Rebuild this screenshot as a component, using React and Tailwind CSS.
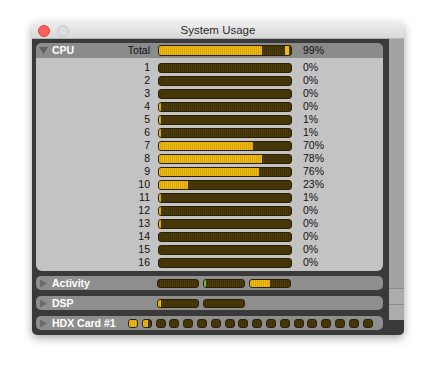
import React from 'react';

const CORES = [
  { n: 1, pct: 0 },
  { n: 2, pct: 0 },
  { n: 3, pct: 0 },
  { n: 4, pct: 0, trace: true },
  { n: 5, pct: 1, trace: true },
  { n: 6, pct: 1, trace: true },
  { n: 7, pct: 71 },
  { n: 8, pct: 78 },
  { n: 9, pct: 76 },
  { n: 10, pct: 22 },
  { n: 11, pct: 1, trace: true },
  { n: 12, pct: 0, trace: true },
  { n: 13, pct: 0, trace: true },
  { n: 14, pct: 0 },
  { n: 15, pct: 0 },
  { n: 16, pct: 0 },
];

const LABELS = { 7: '70%', 8: '78%', 9: '76%', 10: '23%' };

// one meter: dark striped track, yellow striped fill
function Meter({ pct = 0, trace, fill = 'yellow', className = '', children }) {
  const width = trace && pct < 2 ? '2px' : `${pct}%`;
  return (
    <div
      className={`relative shrink-0 overflow-hidden rounded-[3px] border border-[#2a2003] bg-[repeating-linear-gradient(90deg,#4b3b08_0px,#4b3b08_1px,#3f3105_1px,#3f3105_2px)] ${className}`}
    >
      {(pct > 0 || trace) && (
        <div
          className={
            fill === 'green'
              ? 'h-full bg-[#6fbf3c]'
              : 'h-full bg-[repeating-linear-gradient(90deg,#f0bc12_0px,#f0bc12_1px,#d9a408_1px,#d9a408_2px)]'
          }
          style={{ width }}
        />
      )}
      {children}
    </div>
  );
}

function Triangle({ open }) {
  return (
    <svg width="9" height="9" viewBox="0 0 9 9" className="shrink-0">
      {open ? <polygon points="0,1 9,1 4.5,8" fill="#5f5f5f" /> : <polygon points="1,0.5 8,4.5 1,8.5" fill="#6a6a6a" />}
    </svg>
  );
}

function Collapsed({ label, labelWidth, className = '', children }) {
  return (
    <div className={`flex h-[14px] items-center rounded-[5px] bg-[#8e8e8e] pl-[3px] ${className}`}>
      <Triangle />
      <span className={`ml-[4px] shrink-0 text-[10.5px] font-bold leading-none text-white ${labelWidth}`}>{label}</span>
      {children}
    </div>
  );
}

export default function App() {
  return (
    <div className="h-[368px] w-[429px] bg-white pl-[32px] pt-[22px] font-['Liberation_Sans',Arial,sans-serif]">
      <div className="w-[372px] overflow-hidden rounded-[5px] shadow-[0_3px_10px_rgba(0,0,0,0.35)]">
        {/* title bar */}
        <div className="relative flex h-[17px] items-center border-b border-[#b5b5b5] bg-gradient-to-b from-[#eeeeee] to-[#d8d8d8]">
          <div className="ml-[6px] mt-[1px] h-[12px] w-[12px] rounded-full border border-[#e0443e] bg-[#fc605b]" />
          <div className="ml-[7px] mt-[1px] h-[12px] w-[12px] rounded-full border border-[#c8c8c8] bg-[#dcdcdc]" />
          <div className="absolute inset-0 flex items-center justify-center pt-[2px] text-[11.5px] text-[#2b2b2b]">
            System Usage
          </div>
        </div>

        {/* body */}
        <div className="flex bg-[#3a3a3a]">
          <div className="flex w-[357px] shrink-0 flex-col pb-[5px] pl-[4px] pr-[6px] pt-[4px]">
            {/* CPU panel */}
            <div className="overflow-hidden rounded-[6px] bg-[#c3c3c3] pb-[2px]">
              <div className="flex h-[15px] items-center bg-[#8b8b8b] pl-[3px]">
                <Triangle open />
                <span className="ml-[4px] w-[40px] text-[10.5px] font-bold text-white">CPU</span>
                <span className="w-[58px] text-right text-[10.5px] text-[#111]">Total</span>
                <Meter pct={78} className="ml-[8px] h-[11px] w-[134px]">
                  <div className="absolute left-[126px] top-0 h-full w-[4px] bg-[#f0bc12]" />
                </Meter>
                <span className="ml-[11px] text-[10.5px] text-[#111]">99%</span>
              </div>
              <div className="pt-[3px]">
                {CORES.map((c) => (
                  <div key={c.n} className="flex h-[13px] items-center">
                    <span className="w-[114px] text-right text-[10.5px] leading-none text-[#111]">{c.n}</span>
                    <Meter pct={c.pct} trace={c.trace} className="ml-[8px] h-[10px] w-[134px]" />
                    <span className="ml-[11px] text-[10.5px] leading-none text-[#111]">
                      {LABELS[c.n] || `${c.pct}%`}
                    </span>
                  </div>
                ))}
              </div>
            </div>

            <Collapsed label="Activity" labelWidth="w-[105px]" className="mt-[5px]">
              <div className="flex gap-[4px]">
                <Meter className="h-[9px] w-[42px]" />
                <Meter pct={0} trace fill="green" className="h-[9px] w-[42px]" />
                <Meter pct={50} className="h-[9px] w-[42px]" />
              </div>
            </Collapsed>
            <Collapsed label="DSP" labelWidth="w-[105px]" className="mt-[6px]">
              <div className="flex gap-[4px]">
                <Meter pct={7} className="h-[9px] w-[42px]" />
                <Meter className="h-[9px] w-[42px]" />
              </div>
            </Collapsed>
            <Collapsed label="HDX Card #1" labelWidth="w-[76px]" className="mt-[6px]">
              <div className="flex gap-[3.8px]">
                {Array.from({ length: 18 }).map((_, i) => (
                  <Meter
                    key={i}
                    pct={i === 0 ? 100 : i === 1 ? 70 : 0}
                    className="h-[9px] w-[10px] rounded-[2px]"
                  />
                ))}
              </div>
            </Collapsed>
          </div>

          {/* scrollbar */}
          <div className="flex w-[15px] shrink-0 flex-col bg-[#a3a3a3]">
            <div className="flex-1" />
            <div className="h-[16px] border-t border-[#8c8c8c] bg-[#acacac]" />
            <div className="h-[16px] border-t border-[#8c8c8c] bg-[#acacac]" />
            <div className="h-[15px] bg-[#3a3a3a]" />
          </div>
        </div>
      </div>
    </div>
  );
}
